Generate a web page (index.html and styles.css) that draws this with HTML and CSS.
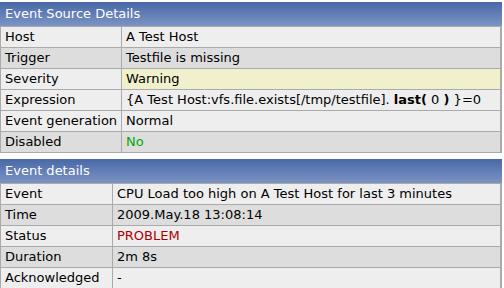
FILE: index.html
```html
<!DOCTYPE html>
<html>

<head>
    <link rel="stylesheet" href="styles.css">
</head>

<body>
    <div class="block">
        <div class="title">Event Source Details</div>
        <table class="details">
            <tr class="even">
                <td>Host</td>
                <td>A Test Host</td>
            </tr>
            <tr class="odd">
                <td>Trigger</td>
                <td>Testfile is missing</td>
            </tr>
            <tr class="even">
                <td>Severity</td>
                <td class="warning">Warning</td>
            </tr>
            <tr class="even">
                <td>Expression</td>
                <td>{A Test Host:vfs.file.exists[/tmp/testfile]. <b>last(</b> 0 <b>)</b> }=0</td>
            </tr>
            <tr class="even">
                <td>Event generation</td>
                <td>Normal</td>
            </tr>
            <tr class="odd">
                <td>Disabled</td>
                <td class="ok">No</td>
            </tr>
        </table>
    </div>

    <div class="block">
        <div class="title">Event details</div>
        <table class="details">
            <tr class="even">
                <td>Event</td>
                <td>CPU Load too high on A Test Host for last 3 minutes</td>
            </tr>
            <tr class="odd">
                <td>Time</td>
                <td>2009.May.18 13:08:14</td>
            </tr>
            <tr class="even">
                <td>Status</td>
                <td class="problem">PROBLEM</td>
            </tr>
            <tr class="odd">
                <td>Duration</td>
                <td>2m 8s</td>
            </tr>
            <tr class="even">
                <td>Acknowledged</td>
                <td>-</td>
            </tr>
        </table>
    </div>
</body>

</html>
```

FILE: styles.css
```css
body {
    margin: 0;
    padding-top: 2px;
    background-color: #ffffff;
    font-family: 'DejaVu Sans', sans-serif;
    font-size: 13px;
    color: #000000;
}

.block {
    width: 502px;
    margin-bottom: 6px;
}

.title {
    height: 24px;
    line-height: 24px;
    padding-left: 5px;
    color: #ffffff;
    background: linear-gradient(to bottom, #4868a6, #7c94c4);
}

.details {
    width: 100%;
    border-collapse: collapse;
    border-right: 2px solid #aaaaaa;
}

.details td {
    border: 1px solid #aaaaaa;
    padding: 3px 4px;
    line-height: 14px;
    white-space: nowrap;
}

.details td:first-child {
    width: 103px;
}

.even {
    background-color: #eeeeee;
}

.odd {
    background-color: #dddddd;
}

.warning {
    background-color: #f0f0cc;
}

.ok {
    color: #00aa00;
}

.problem {
    color: #aa0000;
}
```
